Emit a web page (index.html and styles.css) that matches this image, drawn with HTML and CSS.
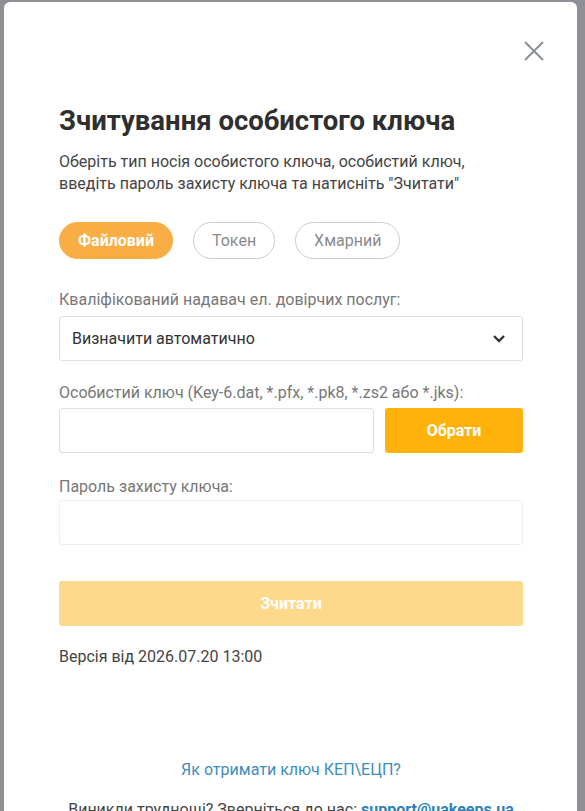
FILE: index.html
```html
<!DOCTYPE html>
<html lang="uk">
<head>
    <meta charset="UTF-8">
    <meta name="viewport" content="width=device-width, initial-scale=1.0">
    <title>Зчитування особистого ключа</title>
    <link rel="stylesheet" href="styles.css">
</head>
<body>

    <!-- Вікно зчитування ключа -->
    <div class="modal">
        <button class="close-btn" aria-label="Закрити">
            <svg width="20" height="20" viewBox="0 0 20 20">
                <path d="M1 1 L19 19 M19 1 L1 19" stroke="#8c9098" stroke-width="2" fill="none"/>
            </svg>
        </button>

        <h1>Зчитування особистого ключа</h1>
        <p class="intro">Оберіть тип носія особистого ключа, особистий ключ, введіть пароль захисту ключа та натисніть "Зчитати"</p>

        <!-- Тип носія -->
        <div class="tabs">
            <button class="tab active">Файловий</button>
            <button class="tab">Токен</button>
            <button class="tab">Хмарний</button>
        </div>

        <label class="field-label">Кваліфікований надавач ел. довірчих послуг:</label>
        <div class="select-box">
            <span>Визначити автоматично</span>
            <svg width="14" height="10" viewBox="0 0 14 10">
                <path d="M2 2 L7 7 L12 2" stroke="#333" stroke-width="2.4" fill="none"/>
            </svg>
        </div>

        <label class="field-label second">Особистий ключ (Key-6.dat, *.pfx, *.pk8, *.zs2 або *.jks):</label>
        <div class="file-row">
            <input type="text" class="text-input">
            <button class="pick-btn">Обрати</button>
        </div>

        <label class="field-label third">Пароль захисту ключа:</label>
        <input type="password" class="text-input full">

        <button class="read-btn">Зчитати</button>

        <p class="version">Версія від 2026.07.20 13:00</p>

        <a href="#" class="help-link">Як отримати ключ КЕП\ЕЦП?</a>
        <p class="support">Виникли труднощі? Зверніться до нас: <a href="#">support@uakeeps.ua</a></p>
    </div>

</body>
</html>
```

FILE: styles.css
```css
body {
    font-family: Roboto, "Noto Sans", Arial, sans-serif;
    background-color: #8f9096;
    margin: 0;
    padding: 0;
    height: 811px;
    overflow: hidden;
}

.modal {
    position: relative;
    margin: 2px 8px 0 4px;
    height: 900px;
    background-color: #fff;
    border-radius: 6px 6px 0 0;
    padding: 104px 54px 0 55px;
    box-sizing: border-box;
}

.close-btn {
    position: absolute;
    top: 39px;
    right: 33px;
    background: none;
    border: none;
    padding: 0;
    cursor: pointer;
}

h1 {
    margin: 0;
    font-size: 27.5px;
    line-height: 30px;
    font-weight: 700;
    color: #2f2f2f;
}

.intro {
    margin: 15px 0 0;
    font-size: 16px;
    line-height: 22px;
    color: #444;
}

.tabs {
    display: flex;
    gap: 20px;
    margin-top: 27px;
}

.tab {
    height: 37px;
    padding: 0 18px;
    border: 1px solid #c9cdd2;
    border-radius: 19px;
    background-color: #fff;
    color: #8a8a8a;
    font-family: inherit;
    font-size: 16px;
}

.tab.active {
    background-color: #f8ad45;
    border-color: #f8ad45;
    color: #fff;
    font-weight: 700;
}

.field-label {
    display: block;
    margin-top: 31px;
    font-size: 16px;
    line-height: 20px;
    color: #777;
}

.field-label.second {
    margin-top: 22px;
}

.field-label.third {
    margin-top: 24px;
}

.select-box {
    display: flex;
    align-items: center;
    justify-content: space-between;
    height: 45px;
    margin-top: 6px;
    padding: 0 16px 0 12px;
    border: 1px solid #dcdfe3;
    border-radius: 3px;
    box-sizing: border-box;
    font-size: 16px;
    color: #333;
}

.file-row {
    display: flex;
    gap: 11px;
    margin-top: 5px;
}

.text-input {
    height: 45px;
    flex: 1;
    border: 1px solid #dcdfe3;
    border-radius: 3px;
    box-sizing: border-box;
    font-size: 16px;
    padding: 0 12px;
}

.text-input.full {
    display: block;
    width: 100%;
    margin-top: 3px;
    border-color: #eceef0;
}

.pick-btn {
    width: 138px;
    height: 45px;
    border: none;
    border-radius: 3px;
    background-color: #ffb20c;
    color: #fff;
    font-family: inherit;
    font-size: 16px;
    font-weight: 700;
}

.read-btn {
    display: block;
    width: 100%;
    height: 45px;
    margin-top: 36px;
    border: none;
    border-radius: 3px;
    background-color: #fed98b;
    color: #fff;
    font-family: inherit;
    font-size: 16px;
    font-weight: 700;
}

.version {
    margin: 20px 0 0;
    font-size: 16px;
    line-height: 22px;
    color: #444;
}

.help-link {
    display: block;
    margin-top: 91px;
    text-align: center;
    font-size: 16px;
    line-height: 22px;
    color: #3d8dbd;
    text-decoration: none;
}

.support {
    margin: 18px 0 0;
    text-align: center;
    font-size: 16px;
    line-height: 22px;
    color: #444;
}

.support a {
    color: #2f80b8;
    font-weight: 700;
    text-decoration: none;
}
```
